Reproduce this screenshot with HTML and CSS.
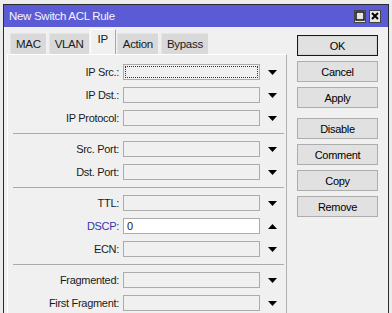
FILE: index.html
```html
<!DOCTYPE html>
<html lang="en">
<head>
    <meta charset="UTF-8">
    <title>New Switch ACL Rule</title>
    <link rel="stylesheet" href="styles.css">
</head>
<body>
    <div class="window">
        <div class="titlebar">
            <span class="title">New Switch ACL Rule</span>
            <span class="tb-btns">
                <span class="tb-btn">
                    <svg width="10" height="10" viewBox="0 0 10 10"><rect x="1" y="1" width="8" height="8" fill="none" stroke="#000" stroke-width="1.4"/></svg>
                </span>
                <span class="tb-btn">
                    <svg width="10" height="10" viewBox="0 0 10 10"><path d="M2 2 L8 8 M8 2 L2 8" stroke="#000" stroke-width="2"/></svg>
                </span>
            </span>
        </div>

        <div class="content">
            <div class="left">
                <div class="tabs">
                    <span class="tab">MAC</span>
                    <span class="tab">VLAN</span>
                    <span class="tab active">IP</span>
                    <span class="tab">Action</span>
                    <span class="tab">Bypass</span>
                </div>

                <div class="panel">
                    <div class="group">
                        <div class="row"><span class="label">IP Src.:</span><span class="box focus"></span><svg class="arrow" width="9" height="5" viewBox="0 0 9 5"><path d="M0 0 H9 L4.5 5 Z"/></svg></div>
                        <div class="row"><span class="label">IP Dst.:</span><span class="box"></span><svg class="arrow" width="9" height="5" viewBox="0 0 9 5"><path d="M0 0 H9 L4.5 5 Z"/></svg></div>
                        <div class="row"><span class="label">IP Protocol:</span><span class="box"></span><svg class="arrow" width="9" height="5" viewBox="0 0 9 5"><path d="M0 0 H9 L4.5 5 Z"/></svg></div>
                    </div>
                    <div class="sep"></div>

                    <div class="group">
                        <div class="row"><span class="label">Src. Port:</span><span class="box"></span><svg class="arrow" width="9" height="5" viewBox="0 0 9 5"><path d="M0 0 H9 L4.5 5 Z"/></svg></div>
                        <div class="row"><span class="label">Dst. Port:</span><span class="box"></span><svg class="arrow" width="9" height="5" viewBox="0 0 9 5"><path d="M0 0 H9 L4.5 5 Z"/></svg></div>
                    </div>
                    <div class="sep"></div>

                    <div class="group">
                        <div class="row"><span class="label">TTL:</span><span class="box"></span><svg class="arrow" width="9" height="5" viewBox="0 0 9 5"><path d="M0 0 H9 L4.5 5 Z"/></svg></div>
                        <div class="row"><span class="label blue">DSCP:</span><span class="box filled">0</span><svg class="arrow" width="9" height="5" viewBox="0 0 9 5"><path d="M0 5 H9 L4.5 0 Z"/></svg></div>
                        <div class="row"><span class="label">ECN:</span><span class="box"></span><svg class="arrow" width="9" height="5" viewBox="0 0 9 5"><path d="M0 0 H9 L4.5 5 Z"/></svg></div>
                    </div>
                    <div class="sep"></div>

                    <div class="group">
                        <div class="row"><span class="label">Fragmented:</span><span class="box"></span><svg class="arrow" width="9" height="5" viewBox="0 0 9 5"><path d="M0 0 H9 L4.5 5 Z"/></svg></div>
                        <div class="row"><span class="label">First Fragment:</span><span class="box"></span><svg class="arrow" width="9" height="5" viewBox="0 0 9 5"><path d="M0 0 H9 L4.5 5 Z"/></svg></div>
                    </div>
                </div>
            </div>

            <div class="actions">
                <button class="btn default">OK</button>
                <button class="btn">Cancel</button>
                <button class="btn">Apply</button>
                <button class="btn spaced">Disable</button>
                <button class="btn">Comment</button>
                <button class="btn">Copy</button>
                <button class="btn">Remove</button>
            </div>
        </div>
    </div>
</body>
</html>
```

FILE: styles.css
```css
body {
    margin: 0;
    background-color: #ececec;
    font-family: 'Liberation Sans', Arial, sans-serif;
    font-size: 11px;
    letter-spacing: -0.3px;
    color: #1a1a1a;
    overflow: hidden;
}

.window {
    margin: 4px 0 0 3px;
    width: 384px;
    height: 308px;
    border: 1px solid #2b2b2b;
    border-bottom: none;
    background-color: #f0f0f0;
    display: flex;
    flex-direction: column;
}

.titlebar {
    height: 22px;
    flex: none;
    background-color: #5b5bd5;
    display: flex;
    align-items: center;
    justify-content: space-between;
    padding-left: 5px;
    padding-right: 7px;
}

.title {
    color: #f4f4ff;
    font-size: 11.5px;
}

.tb-btns {
    display: flex;
    gap: 3px;
}

.tb-btn {
    width: 12px;
    height: 13px;
    background-color: #e6e6e6;
    border: 1px solid #444;
    box-sizing: border-box;
    display: flex;
    align-items: center;
    justify-content: center;
}

.content {
    flex: 1;
    display: flex;
    min-height: 0;
}

.left {
    width: 283px;
    padding-left: 3px;
    box-sizing: border-box;
    display: flex;
    flex-direction: column;
}

.tabs {
    height: 27px;
    flex: none;
    display: flex;
    align-items: flex-end;
    padding-left: 3px;
    font-size: 11.5px;
}

.tab {
    height: 21px;
    line-height: 20px;
    padding: 0 5px;
    margin-right: 3px;
    background-color: #d9d9d9;
    border-top: 1px solid #e4e4e4;
    border-left: 1px solid #e4e4e4;
    box-sizing: border-box;
}

.tab.active {
    height: 25px;
    line-height: 18px;
    padding: 0 7px;
    margin-left: -2px;
    margin-right: 1px;
    background-color: #f0f0f0;
    border-top: 1px solid #fff;
    border-left: 1px solid #fff;
    border-right: 1px solid #a8a8a8;
}

.panel {
    flex: 1;
    overflow: hidden;
    border-top: 1px solid #fff;
    border-left: 1px solid #fff;
    border-right: 1px solid #b0b0b0;
    padding-top: 9px;
}

.group {
    padding-bottom: 7px;
}

.row {
    display: flex;
    align-items: center;
    height: 16px;
}

.row + .row {
    margin-top: 7px;
}

.label {
    width: 111px;
    margin-right: 4px;
    text-align: right;
}

.label.blue {
    color: #3535a8;
}

.box {
    position: relative;
    width: 137px;
    height: 16px;
    box-sizing: border-box;
    border: 1px solid #acacac;
    background-color: #f0f0f0;
    line-height: 14px;
    padding-left: 3px;
}

.box.filled {
    background-color: #fff;
}

.box.focus::after {
    content: '';
    position: absolute;
    top: 1px;
    left: 1px;
    right: 1px;
    bottom: 1px;
    border: 1px dotted #333;
}

.arrow {
    margin-left: 8px;
    fill: #000;
}

.sep {
    height: 1px;
    background-color: #ababab;
    margin: 0 2px 7px 5px;
}

.actions {
    flex: 1;
    padding: 8px 0 0 10px;
    display: flex;
    flex-direction: column;
    gap: 5px;
}

.btn {
    width: 81px;
    height: 21px;
    padding: 0;
    font-family: 'Liberation Sans', Arial, sans-serif;
    font-size: 11px;
    letter-spacing: -0.3px;
    color: #000;
    background-color: #e1e1e1;
    border: 1px solid #adadad;
}

.btn.default {
    border: 1px solid #1a1a1a;
    box-shadow: inset 0 0 0 1px #d4d4d4;
}

.btn.spaced {
    margin-top: 5px;
}
```
